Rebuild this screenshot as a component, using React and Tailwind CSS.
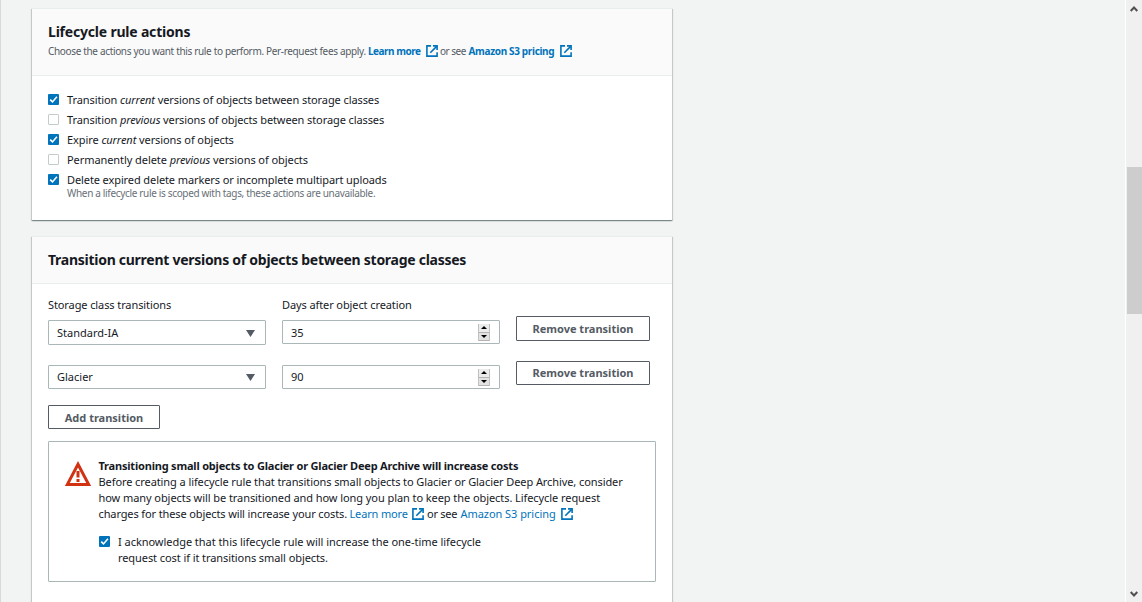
import React from "react";

const cardShadow =
  "shadow-[0_1px_1px_0_rgba(0,28,36,0.3),1px_1px_1px_0_rgba(0,28,36,0.15),-1px_1px_1px_0_rgba(0,28,36,0.15)]";

function ExternalIcon({ className = "" }) {
  return (
    <svg
      viewBox="0 0 12 12"
      className={`inline-block h-3 w-3 shrink-0 ${className}`}
      fill="none"
      stroke="#0073bb"
      strokeWidth="1.6"
    >
      <path d="M5 0.9H0.9V11.1H11.1V7.2" />
      <path d="M7 0.9H11.1V5" />
      <path d="M10.9 1.1L4.3 7.7" />
    </svg>
  );
}

function Checkbox({ checked }) {
  if (!checked) {
    return <span className="block h-[11px] w-[11px] shrink-0 rounded-[1px] border border-[#c3cbcb] bg-white" />;
  }
  return (
    <span className="block h-[11px] w-[11px] shrink-0 rounded-[1px] bg-[#0073bb]">
      <svg viewBox="0 0 11 11" className="block h-[11px] w-[11px]" fill="none" stroke="#fff" strokeWidth="1.6">
        <path d="M2.2 5.6L4.5 7.9L8.9 2.8" />
      </svg>
    </span>
  );
}

function Option({ checked, tracking, children }) {
  return (
    <label className="flex h-5 items-start gap-2">
      <span className="pt-1">
        <Checkbox checked={checked} />
      </span>
      <span className={`whitespace-nowrap leading-5 ${tracking}`}>{children}</span>
    </label>
  );
}

function Card({ children, className = "" }) {
  return (
    <section className={`w-[640px] border-t border-[#eaeded] bg-white ${cardShadow} ${className}`}>{children}</section>
  );
}

function Select({ value, className }) {
  return (
    <div
      className={`flex w-[218px] items-center justify-between rounded-[1px] border border-[#aab7b8] bg-white pl-2 pr-[10px] ${className}`}
    >
      <span>{value}</span>
      <svg viewBox="0 0 9 7" className="h-[7px] w-[9px]" fill="#545b64">
        <path d="M0 0H9L4.5 7Z" />
      </svg>
    </div>
  );
}

function Stepper() {
  return (
    <span className="flex h-[17px] w-[12px] flex-col border-x border-[#c0c0c0] bg-[#ececec]">
      <span className="flex h-[9px] items-center justify-center border-b border-[#b4b4b4]">
        <svg viewBox="0 0 6 3" className="h-[3px] w-[6px]" fill="#000">
          <path d="M3 0L6 3H0Z" />
        </svg>
      </span>
      <span className="flex h-2 items-center justify-center border-b border-[#b4b4b4] bg-[#e2e2e2]">
        <svg viewBox="0 0 6 3" className="h-[3px] w-[6px]" fill="#000">
          <path d="M0 0H6L3 3Z" />
        </svg>
      </span>
    </span>
  );
}

function NumberInput({ value, textClass }) {
  return (
    <div className="flex h-6 w-[218px] items-center justify-between rounded-[1px] border border-[#aab7b8] bg-white pl-2 pr-[9px]">
      <span className={textClass}>{value}</span>
      <Stepper />
    </div>
  );
}

function Button({ children, className }) {
  return (
    <button
      className={`flex items-center justify-center whitespace-nowrap rounded-[1px] border border-[#545b64] bg-white font-bold text-[#545b64] ${className}`}
    >
      {children}
    </button>
  );
}

function Scrollbar() {
  return (
    <div className="flex h-full w-[17px] shrink-0 flex-col items-center border-l border-white bg-[#f0f0f0]">
      <svg viewBox="0 0 8 6" className="mt-1.5 h-1.5 w-2 shrink-0" fill="none" stroke="#505050" strokeWidth="2">
        <path d="M0.7 5L4 1.5L7.3 5" />
      </svg>
      <div className="mt-[155px] h-[147px] w-[15px] shrink-0 bg-[#cdcdcd]" />
      <svg viewBox="0 0 8 6" className="mb-[5px] mt-auto h-1.5 w-2 shrink-0" fill="none" stroke="#505050" strokeWidth="2">
        <path d="M0.7 1L4 4.5L7.3 1" />
      </svg>
    </div>
  );
}

export default function App() {
  return (
    <div className="flex h-[602px] w-[1142px] overflow-hidden bg-[#f2f3f3] font-['Noto_Sans','Open_Sans',sans-serif] text-[11px] text-[#16191f]">
      <main className="flex h-full grow flex-col gap-4 border-l border-[#d5dbdb] pl-[31px] pt-2">
        <Card className="h-[212px] shrink-0">
          <header className="h-[67px] border-b border-[#eaeded] bg-[#fafafa] px-4 pt-[13px]">
            <h2 className="text-[14px] font-bold leading-5 tracking-[-0.2px]">Lifecycle rule actions</h2>
            <p className="flex h-[17px] items-center whitespace-nowrap text-[10px] leading-4 text-[#545b64]">
              <span className="w-[320px] tracking-[-0.34px]">
                Choose the actions you want this rule to perform. Per-request fees apply.
              </span>
              <a className="w-[57.5px] font-bold tracking-[-0.48px] text-[#0073bb]">Learn more</a>
              <ExternalIcon />
              <span className="ml-[2.5px] w-[28.5px] tracking-[-0.5px]">or see</span>
              <a className="w-[91px] font-bold tracking-[-0.34px] text-[#0073bb]">Amazon S3 pricing</a>
              <ExternalIcon />
            </p>
          </header>
          <div className="px-4 pt-[14px]">
            <Option checked tracking="tracking-[-0.09px]">
              Transition <em>current</em> versions of objects between storage classes
            </Option>
            <Option tracking="tracking-[-0.1px]">
              Transition <em>previous</em> versions of objects between storage classes
            </Option>
            <Option checked tracking="tracking-[-0.08px]">
              Expire <em>current</em> versions of objects
            </Option>
            <Option tracking="tracking-[-0.07px]">
              Permanently delete <em>previous</em> versions of objects
            </Option>
            <Option checked tracking="tracking-[-0.1px]">
              Delete expired delete markers or incomplete multipart uploads
            </Option>
            <p className="-mt-[3px] pl-[19px] text-[10px] leading-3 tracking-[-0.33px] text-[#687078]">
              When a lifecycle rule is scoped with tags, these actions are unavailable.
            </p>
          </div>
        </Card>

        <Card className="h-[400px] shrink-0">
          <header className="h-[47px] border-b border-[#eaeded] bg-[#fafafa] px-4 pt-[13px]">
            <h2 className="text-[14px] font-bold leading-5 tracking-[-0.27px]">
              Transition current versions of objects between storage classes
            </h2>
          </header>
          <div className="px-4 pt-[13px]">
            <div className="flex gap-4">
              <div className="w-[218px]">
                <p className="mb-[7px] h-4 leading-4 tracking-[-0.1px]">Storage class transitions</p>
                <Select value="Standard-IA" className="h-[25px] pt-px" />
                <Select value="Glacier" className="mt-5 h-6" />
              </div>
              <div className="w-[218px]">
                <p className="mb-[7px] h-4 leading-4 tracking-[-0.1px]">Days after object creation</p>
                <NumberInput value="35" textClass="pt-[3px]" />
                <div className="h-[21px]" />
                <NumberInput value="90" textClass="pt-px" />
              </div>
              <div className="pt-[19px]">
                <Button className="h-[25px] w-[134px] pt-px">Remove transition</Button>
                <Button className="mt-5 h-6 w-[134px]">Remove transition</Button>
              </div>
            </div>
            <Button className="mt-4 h-6 w-[112px] pt-0.5">Add transition</Button>
            <div className="mt-3 flex h-[141px] w-[608px] rounded-[1px] border border-[#aab7b8] pl-4 pt-4">
              <svg viewBox="0 0 26 26" className="mt-[2px] h-[26px] w-[26px] shrink-0" fill="none">
                <path d="M13 4.2L23.6 24.4H2.4Z" stroke="#d13212" strokeWidth="3" />
                <path d="M13 11V17.6M13 19V22" stroke="#d13212" strokeWidth="3" />
              </svg>
              <div className="ml-[7.5px] whitespace-nowrap leading-4">
                <p className="font-bold tracking-[-0.2px]">
                  Transitioning small objects to Glacier or Glacier Deep Archive will increase costs
                </p>
                <p className="tracking-[-0.085px]">
                  Before creating a lifecycle rule that transitions small objects to Glacier or Glacier Deep Archive, consider
                </p>
                <p className="tracking-[-0.07px]">
                  how many objects will be transitioned and how long you plan to keep the objects. Lifecycle request
                </p>
                <p className="flex items-center tracking-[-0.12px]">
                  <span className="w-[251px]">charges for these objects will increase your costs.</span>
                  <a className="w-[62.5px] tracking-[-0.16px] text-[#0073bb]">Learn more</a>
                  <ExternalIcon />
                  <span className="ml-[3px] w-[33.5px] tracking-[-0.25px]">or see</span>
                  <a className="w-[100px] tracking-[-0.05px] text-[#0073bb]">Amazon S3 pricing</a>
                  <ExternalIcon />
                </p>
                <label className="mt-3 flex gap-2 pl-[0.5px]">
                  <span className="pt-[2px]">
                    <Checkbox checked />
                  </span>
                  <span>
                    <span className="tracking-[-0.04px]">
                      I acknowledge that this lifecycle rule will increase the one-time lifecycle
                    </span>
                    <br />
                    <span className="tracking-[-0.08px]">request cost if it transitions small objects.</span>
                  </span>
                </label>
              </div>
            </div>
          </div>
        </Card>
      </main>
      <Scrollbar />
    </div>
  );
}
